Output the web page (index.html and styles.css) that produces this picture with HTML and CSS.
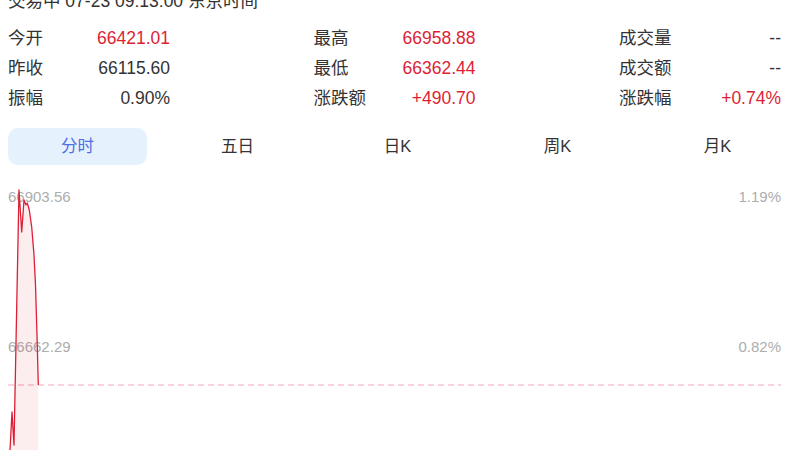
FILE: index.html
```html
<!DOCTYPE html>
<html lang="zh-CN">
<head>
    <meta charset="UTF-8">
    <title>行情 | 分时</title>
    <link rel="stylesheet" href="styles.css">
</head>
<body>
    <div class="page">
        <div class="status">交易中 07-23 09:13:00 东京时间</div>

        <div class="quote">
            <div class="cell"><span class="label">今开</span><span class="val up">66421.01</span></div>
            <div class="cell"><span class="label">最高</span><span class="val up">66958.88</span></div>
            <div class="cell"><span class="label">成交量</span><span class="val">--</span></div>

            <div class="cell"><span class="label">昨收</span><span class="val">66115.60</span></div>
            <div class="cell"><span class="label">最低</span><span class="val up">66362.44</span></div>
            <div class="cell"><span class="label">成交额</span><span class="val">--</span></div>

            <div class="cell"><span class="label">振幅</span><span class="val">0.90%</span></div>
            <div class="cell"><span class="label">涨跌额</span><span class="val up">+490.70</span></div>
            <div class="cell"><span class="label">涨跌幅</span><span class="val up">+0.74%</span></div>
        </div>

        <div class="tabs">
            <div class="tab active">分时</div>
            <div class="tab">五日</div>
            <div class="tab">日K</div>
            <div class="tab">周K</div>
            <div class="tab">月K</div>
        </div>

        <div class="chart">
            <svg width="773" height="285" viewBox="0 0 773 285">
                <text class="axis" x="0" y="37">66903.56</text>
                <text class="axis" x="773" y="37" text-anchor="end">1.19%</text>
                <text class="axis" x="0" y="187">66662.29</text>
                <text class="axis" x="773" y="187" text-anchor="end">0.82%</text>

                <!-- 昨收基准线 -->
                <line class="base" x1="0" y1="220" x2="773" y2="220"></line>

                <path class="area" d="M2 285 L4 247 L6 280 L11 25 L13.7 67 L16 35 L18 40 L19.3 38 L21.3 45 L23.7 62 L26 90 L27.5 120 L29 170 L30.3 220 L30.3 285 Z"></path>
                <path class="price" d="M2 285 L4 247 L6 280 L11 25 L13.7 67 L16 35 L18 40 L19.3 38 L21.3 45 L23.7 62 L26 90 L27.5 120 L29 170 L30.3 220"></path>
            </svg>
        </div>
    </div>
</body>
</html>
```

FILE: styles.css
```css
body { margin: 0; background: #fff; color: #333; font-family: "Liberation Sans", "Noto Sans CJK SC", sans-serif; overflow: hidden; }
.page { padding: 0 19px 0 8px; }

.status { font-size: 17.5px; line-height: 24px; margin-top: -11px; white-space: nowrap; }

.quote { display: grid; grid-template-columns: repeat(3, 162px); justify-content: space-between; margin-top: 10px; font-size: 17.5px; }
.quote .cell { display: flex; justify-content: space-between; align-items: baseline; height: 30px; line-height: 30px; }
.quote .val { color: #333; }
.quote .val.up { color: #dd1f35; }

.tabs { display: flex; gap: 21px; margin-top: 15px; }
.tab { flex: none; width: 139px; height: 37px; line-height: 37px; text-align: center; font-size: 16.5px; color: #333; border-radius: 10px; }
.tab.active { background: #e6f1fe; color: #4d6fe0; }

.chart svg { display: block; }
.chart .axis { font-family: "Liberation Sans", sans-serif; font-size: 15px; fill: #adadad; }
.chart .base { stroke: #f2a6b6; stroke-width: 1; stroke-dasharray: 6 4; }
.chart .area { fill: rgba(221, 31, 53, 0.08); }
.chart .price { fill: none; stroke: #dd1f35; stroke-width: 1.3; stroke-linejoin: round; }
```
